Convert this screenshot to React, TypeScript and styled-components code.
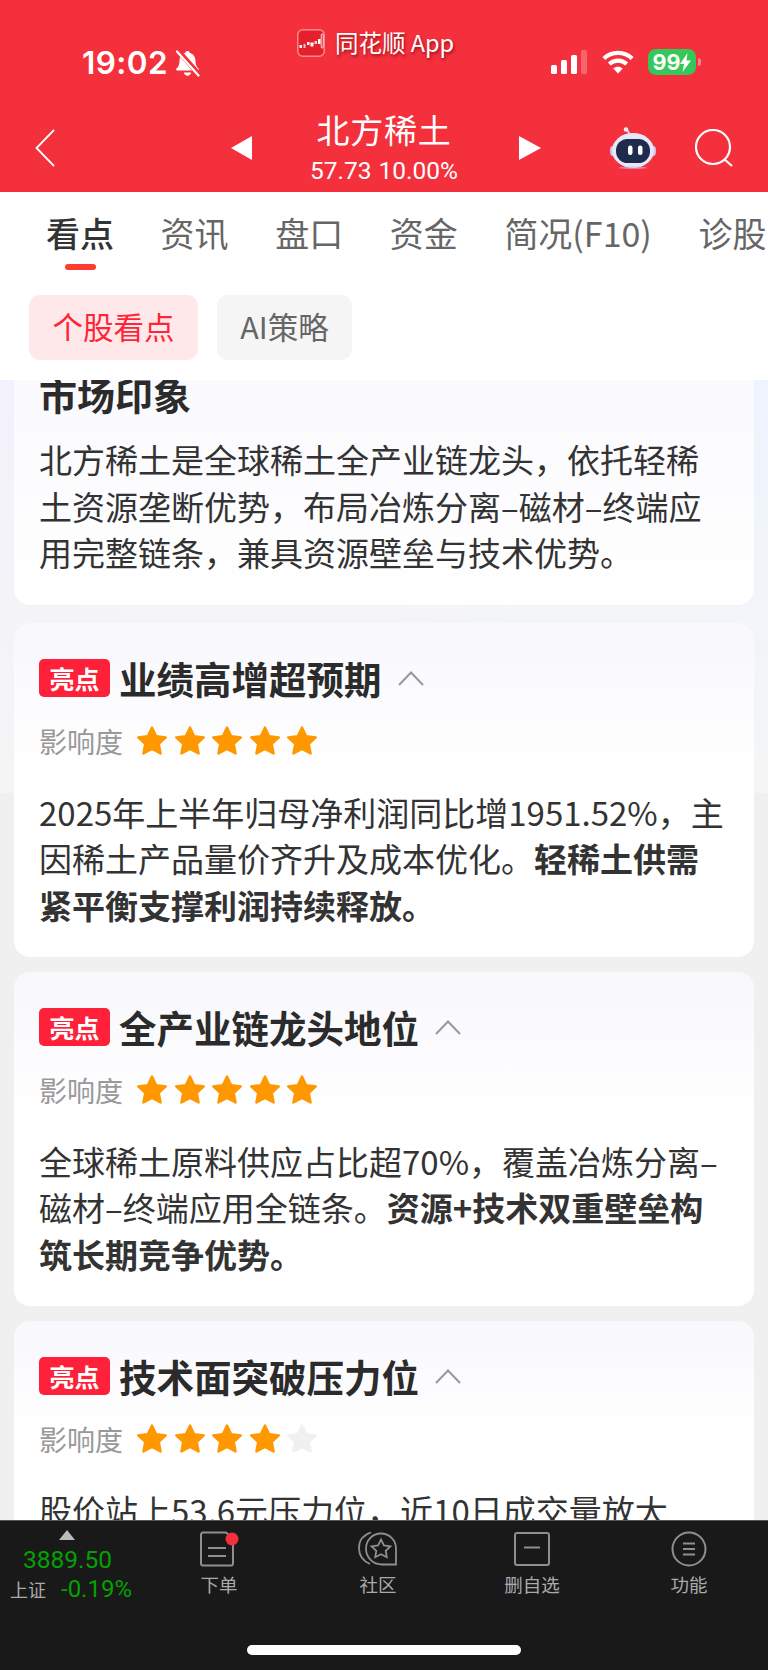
import React from 'react';
import styled, { createGlobalStyle } from 'styled-components';

const CJK = `"Noto Sans CJK SC", "Noto Sans", sans-serif`;

const GlobalStyle = createGlobalStyle`
  html, body {
    margin: 0;
    padding: 0;
    background: #f0f0f0;
  }
  * {
    box-sizing: border-box;
  }
`;

const Page = styled.div`
  width: 768px;
  height: 1670px;
  display: flex;
  flex-direction: column;
  overflow: hidden;
  font-family: ${CJK};
  color: #333;
`;

/* red header */
const Header = styled.header`
  height: 192px;
  flex: none;
  background: #f3303b;
  color: #fff;
`;

const StatusBar = styled.div`
  height: 104px;
  display: flex;
  align-items: flex-start;
`;

const StatusLeft = styled.div`
  width: 297px;
  height: 28px;
  margin-top: 49px;
  padding-left: 82px;
  display: flex;
  align-items: center;
  gap: 6px;
`;

const Clock = styled.span`
  font-family: Inter, sans-serif;
  font-size: 31.5px;
  font-weight: 600;
  line-height: 28px;
  letter-spacing: 0.4px;
`;

const AppLabel = styled.div`
  width: 254px;
  height: 28px;
  margin-top: 28px;
  display: flex;
  align-items: center;
  gap: 10px;
  font-size: 23.5px;
  line-height: 28px;
  text-shadow: 1px 2px 3px rgba(110, 0, 10, 0.65);
  white-space: nowrap;
`;

const AppIcon = styled.svg`
  margin-top: 2px;
`;

const StatusRight = styled.div`
  margin-top: 49px;
  display: flex;
  align-items: center;
  height: 26px;
`;

const Wifi = styled.svg`
  margin-left: 15px;
`;

const Battery = styled.div`
  width: 48px;
  height: 26px;
  margin-left: 14px;
  border-radius: 8px;
  background: #34c759;
  display: flex;
  align-items: center;
  justify-content: center;
  font-family: Inter, sans-serif;
  font-size: 21.5px;
  font-weight: 700;
  line-height: 26px;
`;

const BatteryNub = styled.div`
  width: 3px;
  height: 8px;
  margin-left: 2px;
  border-radius: 0 3px 3px 0;
  background: rgba(255, 255, 255, 0.4);
`;

const Nav = styled.nav`
  height: 88px;
  display: flex;
  align-items: center;
`;

const NavLeft = styled.div`
  width: 252px;
  padding-left: 35px;
  display: flex;
  align-items: center;
  justify-content: space-between;
`;

const NavCenter = styled.div`
  width: 264px;
  margin-top: -3px;
  display: flex;
  flex-direction: column;
  align-items: center;
`;

const StockName = styled.div`
  font-size: 33px;
  line-height: 38px;
  letter-spacing: 0.8px;
`;

const StockQuote = styled.div`
  margin-top: 10px;
  font-family: Roboto, sans-serif;
  font-size: 24.5px;
  line-height: 26px;
  display: flex;
  gap: 7px;
`;

const NavRight = styled.div`
  width: 252px;
  padding-left: 3px;
  display: flex;
  align-items: center;
`;

const Robot = styled.svg`
  margin-left: 69px;
`;

const Search = styled.svg`
  margin-left: 39px;
`;

/* tabs and pills */
const TabArea = styled.div`
  flex: none;
  height: 188px;
  background: #fff;
`;

const Tabs = styled.div`
  height: 103px;
  padding: 23px 0 0 46px;
  display: flex;
  gap: 46.6px;
  overflow: hidden;
`;

const Tab = styled.div<{ $active?: boolean }>`
  display: flex;
  flex-direction: column;
  align-items: center;
  flex: none;
  font-size: 34px;
  line-height: 36px;
  font-weight: ${p => (p.$active ? 500 : 400)};
  color: ${p => (p.$active ? '#333' : '#666')};
`;

const TabMark = styled.div`
  width: 31px;
  height: 6px;
  margin-top: 13px;
  border-radius: 3px;
  background: #ff3b30;
`;

const Pills = styled.div`
  padding-left: 29px;
  display: flex;
  gap: 19px;
`;

const Pill = styled.div<{ $active?: boolean }>`
  width: ${p => (p.$active ? 169 : 135)}px;
  height: 65px;
  padding-bottom: 3px;
  border-radius: 11px;
  display: flex;
  align-items: center;
  justify-content: center;
  font-size: 30.5px;
  background: ${p => (p.$active ? '#fee8ea' : '#f5f5f5')};
  color: ${p => (p.$active ? '#ff2436' : '#666')};
`;

/* scrolled list */
const Feed = styled.main`
  flex: 1;
  min-height: 0;
  overflow: hidden;
  padding: 0 14px;
  background:
    linear-gradient(180deg, rgba(245, 245, 245, 0) 0%, #f5f5f5 100%) top / 100% 413px no-repeat,
    linear-gradient(90deg, #f3f1fc 0%, #f4f5fb 55%, #edf4fe 100%) top / 100% 413px no-repeat,
    #f0f0f0;
`;

const IntroCard = styled.section`
  margin: -44px 0 18px;
  padding: 33px 25px 29px;
  border-radius: 16px;
  background: linear-gradient(180deg, #f9f9fe 0%, #ffffff 100%);
`;

const IntroTitle = styled.h2`
  margin: 0 0 17px;
  font-size: 38px;
  line-height: 50px;
  font-weight: 700;
  color: #2b2b2b;
`;

const Card = styled.section`
  margin-bottom: 14.5px;
  padding: 36px 25px 29px;
  border-radius: 16px;
  background: linear-gradient(180deg, #f8f8fd 0%, #ffffff 45%);
`;

const CardHead = styled.div`
  height: 38px;
  display: flex;
  align-items: center;
`;

const Badge = styled.span`
  width: 71px;
  height: 38px;
  flex: none;
  border-radius: 5px;
  background: #ff2039;
  color: #fff;
  display: flex;
  align-items: center;
  justify-content: center;
  font-size: 25px;
  font-weight: 700;
`;

const CardTitle = styled.h3`
  margin: 0 0 0 9px;
  font-size: 37.5px;
  line-height: 38px;
  font-weight: 700;
  color: #2b2b2b;
`;

const Caret = styled.svg`
  margin-left: 15px;
  flex: none;
`;

const ImpactRow = styled.div`
  height: 32px;
  margin-top: 28px;
  display: flex;
  align-items: center;
  color: #999;
  font-size: 28px;
`;

const Stars = styled.div`
  margin-left: 13px;
  display: flex;
  gap: 5.5px;
`;

const Body = styled.p<{ $spaced?: boolean }>`
  margin: ${p => (p.$spaced ? '32px' : '0')} 0 0;
  font-size: 33px;
  line-height: 46.5px;
  color: #333;
`;

/* bottom toolbar */
const Toolbar = styled.footer`
  flex: none;
  height: 150px;
  position: relative;
  overflow: hidden;
  background: #191919;
  border-top: 1px solid #555;
  display: grid;
  grid-template-columns: 140px 158px 160px 148px 166px;
  align-items: start;
  color: #aaa;
`;

const IndexCell = styled.div`
  padding: 9px 0 0 10px;
  display: flex;
  flex-direction: column;
  font-family: Roboto, sans-serif;
`;

const IndexArrow = styled.div`
  width: 0;
  height: 0;
  margin-left: 49px;
  border-left: 8px solid transparent;
  border-right: 8px solid transparent;
  border-bottom: 10px solid #bbb;
`;

const IndexValue = styled.div`
  margin: 7px 0 0 13px;
  font-size: 24.5px;
  line-height: 26px;
  color: #02a202;
`;

const IndexLine = styled.div`
  margin-top: 4px;
  display: flex;
  align-items: center;
  gap: 15px;
  line-height: 24px;
`;

const IndexName = styled.span`
  font-family: ${CJK};
  font-size: 18px;
`;

const IndexChange = styled.span`
  font-size: 24px;
  color: #02a202;
`;

const ToolItem = styled.div`
  padding-top: 10px;
  display: flex;
  flex-direction: column;
  align-items: center;
`;

const ToolIcon = styled.svg`
  display: block;
`;

const ToolLabel = styled.span`
  margin-top: 5px;
  font-size: 18.5px;
  line-height: 24px;
`;

const HomeBar = styled.div`
  position: absolute;
  left: 247px;
  bottom: 15px;
  width: 274px;
  height: 10px;
  border-radius: 5px;
  background: #fff;
`;

const StarIcon = ({ on = true }: { on?: boolean }) => (
  <svg width="32" height="31" viewBox="0 0 32 31">
    <polygon
      points="16,2.5 20.2,11.2 29.8,12.4 22.8,19 24.6,28.5 16,23.9 7.4,28.5 9.2,19 2.2,12.4 11.8,11.2"
      fill={on ? '#ff9800' : '#f0f0f0'}
      stroke={on ? '#ff9800' : '#f0f0f0'}
      strokeWidth="2.4"
      strokeLinejoin="round"
    />
  </svg>
);

const Highlight = ({ title, stars, children }: { title: string; stars: number; children: React.ReactNode }) => (
  <Card>
    <CardHead>
      <Badge>亮点</Badge>
      <CardTitle>{title}</CardTitle>
      <Caret width="28" height="16" viewBox="0 0 28 16" fill="none">
        <path d="M2 15 14 2.5 26 15" stroke="#999" strokeWidth="2" />
      </Caret>
    </CardHead>
    <ImpactRow>
      影响度
      <Stars>
        {[0, 1, 2, 3, 4].map(i => (
          <StarIcon key={i} on={i < stars} />
        ))}
      </Stars>
    </ImpactRow>
    <Body $spaced>{children}</Body>
  </Card>
);

const tabs = ['看点', '资讯', '盘口', '资金', '简况(F10)', '诊股'];

export default function App() {
  return (
    <Page>
      <GlobalStyle />
      <Header>
        <StatusBar>
          <StatusLeft>
            <Clock>19:02</Clock>
            <svg width="27" height="28" viewBox="0 0 27 28">
              <path
                d="M13.5 2c1.3 0 2.2.9 2.4 2 3.6 1 5.6 4 5.6 8 0 4 1 5.8 3 7.5.7.6.4 2-.6 2H3.1c-1 0-1.3-1.4-.6-2C4.5 17.8 5.5 16 5.5 12c0-4 2-7 5.6-8 .2-1.1 1.1-2 2.4-2Z"
                fill="#fff"
              />
              <path d="M9.8 23.5h7.4c-.4 2-1.9 3.2-3.7 3.2s-3.3-1.2-3.7-3.2Z" fill="#fff" />
              <path d="M4 1.5 25 25.5" stroke="#f3303b" strokeWidth="5" />
              <path d="M3 2.5 24.5 26.5" stroke="#fff" strokeWidth="2.2" strokeLinecap="round" />
            </svg>
          </StatusLeft>
          <AppLabel>
            <AppIcon width="28" height="28" viewBox="0 0 28 28">
              <rect x="0.75" y="0.75" width="26.5" height="26.5" rx="5" fill="#e3202c" stroke="#f48a8e" strokeWidth="1.5" />
              <g fill="#fff">
                <rect x="2.5" y="16" width="2.5" height="3" />
                <rect x="6.5" y="15" width="2" height="4" opacity=".7" />
                <rect x="10" y="13" width="2.5" height="3" />
                <rect x="13.5" y="13.5" width="3" height="4" />
                <rect x="17.5" y="12" width="2.5" height="3" opacity=".8" />
                <rect x="21" y="10" width="2.5" height="5" />
              </g>
              <rect x="24.2" y="5" width="2" height="14" rx="1" fill="none" stroke="#fff" strokeWidth=".8" />
            </AppIcon>
            <span>同花顺 App</span>
          </AppLabel>
          <StatusRight>
            <svg width="36" height="24" viewBox="0 0 36 24" fill="#fff">
              <rect x="0" y="15" width="6" height="9" rx="1.5" />
              <rect x="10" y="10" width="6" height="14" rx="1.5" />
              <rect x="20" y="5" width="6" height="19" rx="1.5" />
              <rect x="30" y="0" width="6" height="24" rx="1.5" opacity=".25" />
            </svg>
            <Wifi width="32" height="24" viewBox="0 0 32 24" fill="none" stroke="#fff" strokeWidth="4.2">
              <path d="M1.8 8.5C9.8 1 22.2 1 30.2 8.5" />
              <path d="M7.3 14c5-4.5 12.4-4.5 17.4 0" />
              <path d="M16 23.5l-4.8-5c2.8-2.2 6.8-2.2 9.6 0Z" fill="#fff" stroke="none" />
            </Wifi>
            <Battery>
              99
              <svg width="11" height="19" viewBox="0 0 11 19" fill="#fff">
                <path d="M7.5 0 0 11h4l-1.5 8L11 7.5H6.5Z" />
              </svg>
            </Battery>
            <BatteryNub />
          </StatusRight>
        </StatusBar>
        <Nav>
          <NavLeft>
            <svg width="20" height="38" viewBox="0 0 20 38" fill="none">
              <path d="M19 1 1.5 19 19 37" stroke="#fff" strokeWidth="1.8" />
            </svg>
            <svg width="21" height="24" viewBox="0 0 21 24" fill="#fff">
              <path d="M21 0v24L0 12Z" />
            </svg>
          </NavLeft>
          <NavCenter>
            <StockName>北方稀土</StockName>
            <StockQuote>
              <span>57.73</span>
              <span>10.00%</span>
            </StockQuote>
          </NavCenter>
          <NavRight>
            <svg width="22" height="24" viewBox="0 0 22 24" fill="#fff">
              <path d="M0 0v24l22-12Z" />
            </svg>
            <Robot width="46" height="42" viewBox="0 0 46 42" fill="none">
              <path d="M19 7C19 4 17 3 16 2.5" stroke="#dfe3f5" strokeWidth="1.8" />
              <circle cx="16" cy="2.5" r="2.3" fill="#e8eaf8" />
              <ellipse cx="2.5" cy="24" rx="2.5" ry="5" fill="#c9c7ef" />
              <ellipse cx="43.5" cy="24" rx="2.5" ry="5" fill="#c9c7ef" />
              <ellipse cx="23" cy="23.5" rx="21" ry="17.5" fill="#e6e8f8" />
              <path d="M8 41c5-2 25-2 30 0-7 1.5-23 1.5-30 0Z" fill="#c9b8f0" opacity=".6" />
              <rect x="6" y="12" width="34" height="24" rx="11.5" fill="#1f2b4d" />
              <rect x="18" y="18.5" width="4.5" height="9.5" rx="2.2" fill="#fff" />
              <rect x="28" y="18.5" width="4.5" height="9.5" rx="2.2" fill="#fff" />
            </Robot>
            <Search width="38" height="38" viewBox="0 0 38 38" fill="none" stroke="#fff" strokeWidth="2.2">
              <circle cx="18" cy="18" r="17" />
              <path d="M29 30 37 37" />
            </Search>
          </NavRight>
        </Nav>
      </Header>

      <TabArea>
        <Tabs>
          {tabs.map((t, i) => (
            <Tab key={t} $active={i === 0}>
              {t}
              {i === 0 && <TabMark />}
            </Tab>
          ))}
        </Tabs>
        <Pills>
          <Pill $active>个股看点</Pill>
          <Pill>AI策略</Pill>
        </Pills>
      </TabArea>

      <Feed>
        <IntroCard>
          <IntroTitle>市场印象</IntroTitle>
          <Body>北方稀土是全球稀土全产业链龙头，依托轻稀土资源垄断优势，布局冶炼分离–磁材–终端应用完整链条，兼具资源壁垒与技术优势。</Body>
        </IntroCard>
        <Highlight title="业绩高增超预期" stars={5}>
          2025年上半年归母净利润同比增1951.52%，主因稀土产品量价齐升及成本优化。<b>轻稀土供需紧平衡支撑利润持续释放。</b>
        </Highlight>
        <Highlight title="全产业链龙头地位" stars={5}>
          全球稀土原料供应占比超70%，覆盖冶炼分离–磁材–终端应用全链条。<b>资源+技术双重壁垒构筑长期竞争优势。</b>
        </Highlight>
        <Highlight title="技术面突破压力位" stars={4}>
          股价站上53.6元压力位，近10日成交量放大
        </Highlight>
      </Feed>

      <Toolbar>
        <IndexCell>
          <IndexArrow />
          <IndexValue>3889.50</IndexValue>
          <IndexLine>
            <IndexName>上证</IndexName>
            <IndexChange>-0.19%</IndexChange>
          </IndexLine>
        </IndexCell>
        <ToolItem>
          <ToolIcon width="40" height="36" viewBox="0 0 40 36" fill="none" stroke="#8f8f8f" strokeWidth="2">
            <path d="M24 1.5H4a2 2 0 0 0-2 2v29a2 2 0 0 0 2 2h28a2 2 0 0 0 2-2V8L27 1.5h-3" />
            <path d="M9 17h18M9 25h18" />
            <circle cx="33" cy="8" r="6.5" fill="#f3303b" stroke="none" />
          </ToolIcon>
          <ToolLabel>下单</ToolLabel>
        </ToolItem>
        <ToolItem>
          <ToolIcon width="40" height="36" viewBox="0 0 40 36" fill="none" stroke="#8f8f8f" strokeWidth="1.8">
            <path d="M13 1.5C5 4 1 10 1 17c0 7 4 13 11 16" />
            <path d="M38 33.5V17.5a15 15 0 1 0-30 0c0 9 7 16 16 16h14Z" />
            <path d="M23 8.5l2.9 5.9 6.5.9-4.7 4.5 1.1 6.4-5.8-3-5.8 3 1.1-6.4-4.7-4.5 6.5-.9Z" />
          </ToolIcon>
          <ToolLabel>社区</ToolLabel>
        </ToolItem>
        <ToolItem>
          <ToolIcon width="40" height="36" viewBox="0 0 40 36" fill="none" stroke="#8f8f8f" strokeWidth="2">
            <rect x="3" y="2" width="34" height="32" rx="2" />
            <path d="M12 16.5h16" />
          </ToolIcon>
          <ToolLabel>删自选</ToolLabel>
        </ToolItem>
        <ToolItem>
          <ToolIcon width="40" height="36" viewBox="0 0 40 36" fill="none" stroke="#8f8f8f" strokeWidth="2">
            <circle cx="20" cy="18" r="16.5" />
            <path d="M14 12.5h12M14 18h12M14 23.5h12" />
          </ToolIcon>
          <ToolLabel>功能</ToolLabel>
        </ToolItem>
        <HomeBar />
      </Toolbar>
    </Page>
  );
}
